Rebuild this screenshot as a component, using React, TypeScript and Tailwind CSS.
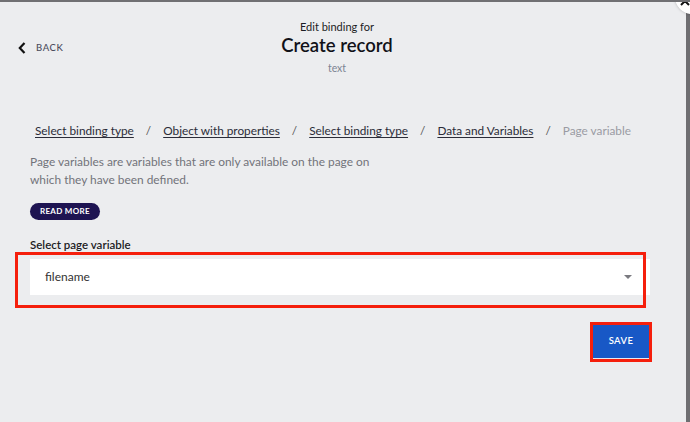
import React from "react";

export default function App() {
  const crumbs = ["Select binding type", "Object with properties", "Select binding type", "Data and Variables"];
  return (
    <div
      className="relative w-[690px] h-[422px] overflow-hidden bg-[#ecedef] flex flex-row border-t-2 border-[#707073]"
      style={{ fontFamily: "Lato, 'Open Sans', Arial, sans-serif" }}
    >
      <div className="flex-1 flex flex-col pl-[30px] pr-[36px]">
        {/* header */}
        <div className="relative flex flex-col items-center pt-[18px] pr-[6px]">
          <div className="text-[11px] leading-[14px] text-[#1c1c24]">Edit binding for</div>
          <div className="text-[18.5px] leading-[22px] font-semibold text-[#111118] mt-0">Create record</div>
          <div className="text-[10.5px] leading-[13px] text-[#7d8594] mt-[6px]">text</div>
          <div className="absolute left-[-12px] top-[39px] flex items-center gap-[10px]">
            <svg width="8" height="12" viewBox="0 0 8 12">
              <path d="M6.5 1 L1.8 6 L6.5 11" fill="none" stroke="#111" strokeWidth="2.2" />
            </svg>
            <span className="text-[9.5px] tracking-[0.6px] text-[#4b4c5c] font-medium">BACK</span>
          </div>
        </div>

        {/* breadcrumbs */}
        <div className="flex items-center mt-[49px] ml-[5px] text-[11.8px] leading-[14px]">
          {crumbs.map((c, i) => (
            <React.Fragment key={i}>
              <span className="text-[#2b2c38] underline underline-offset-2">{c}</span>
              <span className="text-[#555] mx-[12px]">/</span>
            </React.Fragment>
          ))}
          <span className="text-[#9a9ba3]">Page variable</span>
        </div>

        <div className="mt-[15px] text-[11.9px] leading-[18px] text-[#72737a]">
          Page variables are variables that are only available on the page on
          <br />
          which they have been defined.
        </div>

        <div className="mt-[7px]">
          <span className="inline-flex items-center h-[17px] px-[10px] rounded-full bg-[#1e1452] text-white text-[8px] font-bold tracking-[0.3px]">
            READ MORE
          </span>
        </div>

        <div className="mt-[18px] text-[11.5px] leading-[14px] font-semibold text-[#1c1c24]">Select page variable</div>

        <div className="relative mt-[7px] h-[36px] bg-white flex items-center justify-between pl-[15px] pr-[18px]">
          <span className="text-[12px] text-[#333]">filename</span>
          <svg width="8" height="5" viewBox="0 0 8 5">
            <path d="M0 0 L8 0 L4 4 Z" fill="#7a7a80" />
          </svg>
          <div className="absolute left-[-15px] top-[-7px] w-[631px] h-[56px] border-[3px] border-[#f51f0c] pointer-events-none" />
        </div>

        <div className="flex justify-end mt-[30px] pr-[1px]">
          <div className="relative">
            <div className="w-[56px] h-[34px] bg-[#1858c6] border-b border-[#e8e8f0] flex items-center justify-center text-white text-[9.5px] font-semibold tracking-[0.4px]">
              SAVE
            </div>
            <div className="absolute left-[-3px] top-[-3px] w-[62px] h-[40px] border-[3px] border-[#f51f0c]" />
          </div>
        </div>
      </div>
      <div className="w-[4px] bg-[#6e6e71]" />

      <div className="absolute left-[675px] top-[-22px] w-[34px] h-[34px] rounded-full bg-white shadow-[0_0_3px_rgba(0,0,0,0.25)]">
        <svg width="10" height="8" viewBox="0 0 10 8" className="absolute left-[5px] top-[19px]">
          <path d="M1 6 L5 2 L9 6" fill="none" stroke="#111" strokeWidth="2" />
        </svg>
      </div>
    </div>
  );
}
